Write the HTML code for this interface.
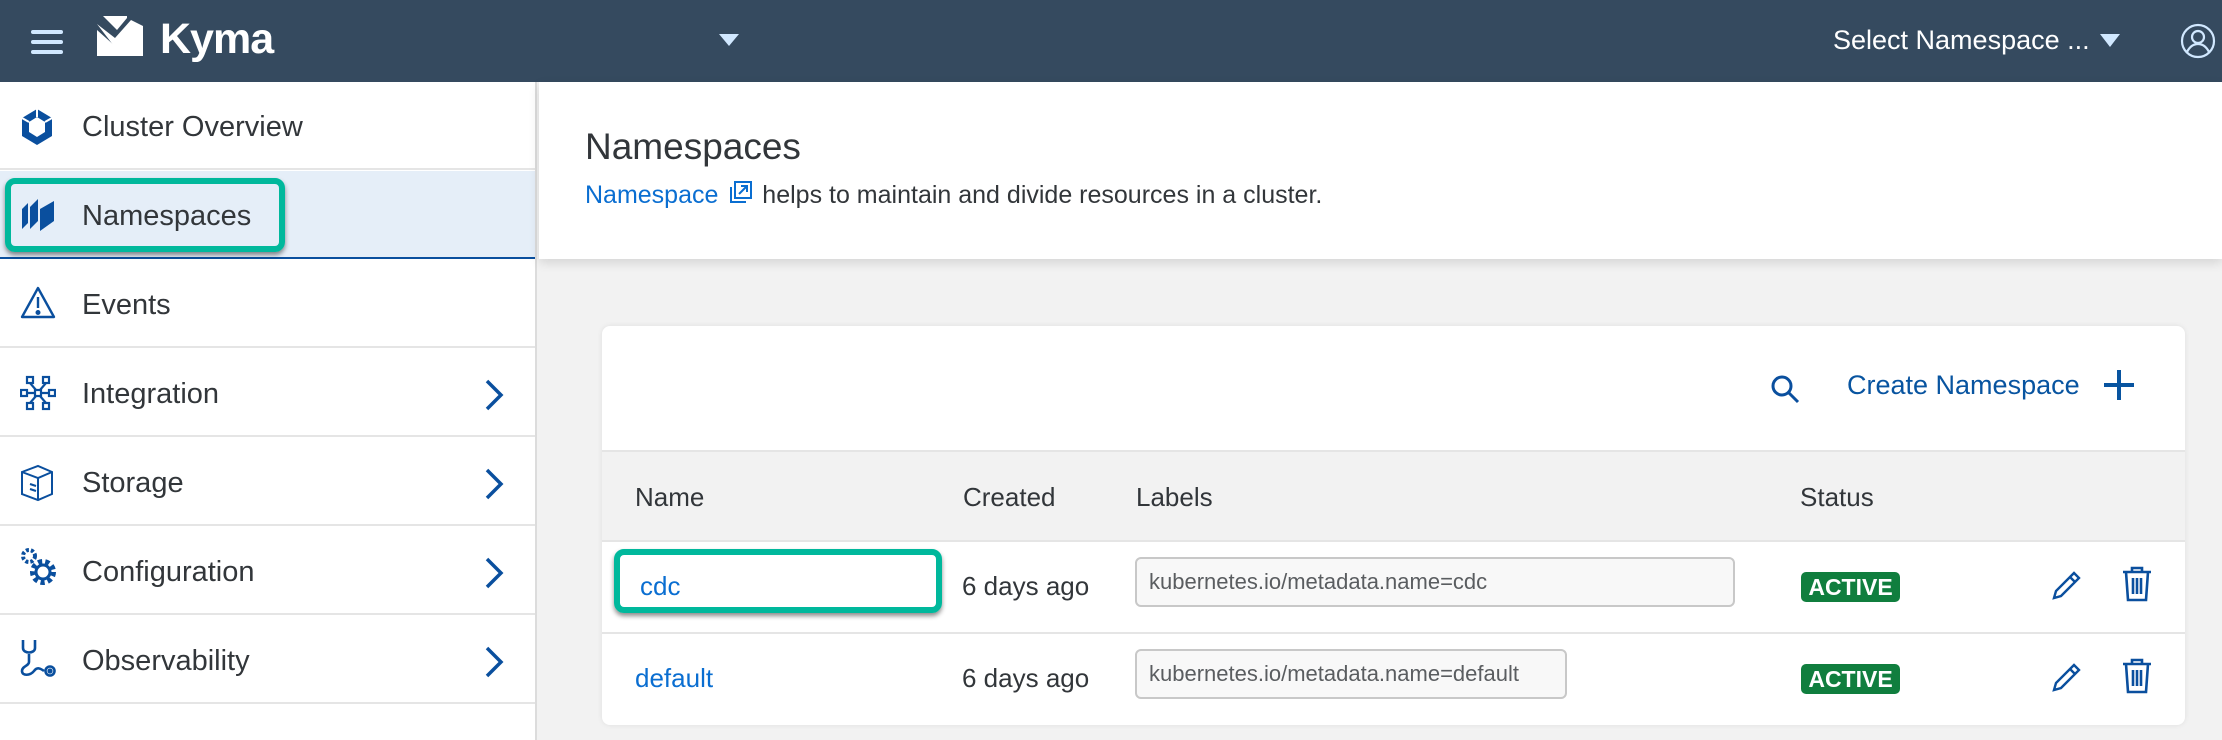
<!DOCTYPE html>
<html><head><meta charset="utf-8"><style>
*{box-sizing:border-box;margin:0;padding:0}
body{width:2222px;height:740px;overflow:hidden;background:#f2f2f2;font-family:"Liberation Sans",sans-serif;color:#32363a;position:relative}
.hdr{position:absolute;left:0;top:0;width:2222px;height:82px;background:#354a5f;color:#fff}
.abs{position:absolute}
.side{position:absolute;left:0;top:82px;width:537px;height:658px;background:#fff;border-right:2px solid #dcdcdc}
.item{position:absolute;left:0;width:535px;height:88px;border-bottom:2px solid #e5e5e5}
.item span{position:absolute;left:82px;top:29px;font-size:29px;color:#32363a}
.item svg.ic{position:absolute;left:20px;top:26px}
.chev{position:absolute;left:484px;top:30px}
.main{position:absolute;left:539px;top:82px;width:1683px;height:177px;background:#fff;box-shadow:0 4px 10px rgba(0,0,0,.12)}
.card{position:absolute;left:602px;top:326px;width:1583px;height:399px;background:#fff;border-radius:8px;box-shadow:0 0 6px rgba(0,0,0,.08);overflow:hidden}
.th{position:absolute;top:124px;left:0;width:100%;height:92px;background:#f2f2f2;border-top:2px solid #e5e5e5;border-bottom:2px solid #e5e5e5}
.th span,.row span.t{position:absolute;font-size:26px}
.row{position:absolute;left:0;width:100%;height:92px;border-bottom:2px solid #e5e5e5}
.lab{position:absolute;left:533px;top:15px;height:50px;border:2px solid #c8c8c8;border-radius:6px;background:#f8f8f8;font-size:22px;color:#5a5d60;padding:10px 12px 0}
.badge{position:absolute;left:1199px;top:30px;width:99px;height:30px;background:#107e3e;border-radius:5px;color:#fff;font-weight:bold;font-size:23px;text-align:center;line-height:30px}
</style></head><body>
<div class="hdr">
 <svg class="abs" style="left:31px;top:30px" width="32" height="24"><rect y="0" width="32" height="4" rx="2" fill="#d1e8ff"/><rect y="10" width="32" height="4" rx="2" fill="#d1e8ff"/><rect y="20" width="32" height="4" rx="2" fill="#d1e8ff"/></svg>
 <svg class="abs" style="left:97px;top:16px" width="46" height="40" viewBox="0 0 46 40"><path d="M0 8 L18 22 L34 4 L46 10 L46 40 L0 40 L0 30 L20 30 L46 18 L46 34 L20 34 Z" fill="#fff"/><path d="M6 0 L20 14 L30 2 L30 0 Z" fill="#fff"/><path d="M0 14 L18 30 L0 30Z" fill="#fff"/></svg>
 <div class="abs" style="left:160px;top:15px;font-size:43px;font-weight:bold;letter-spacing:-1px">Kyma</div>
 <svg class="abs" style="left:719px;top:34px" width="20" height="12"><path d="M0 0H20L10 12Z" fill="#d1e8ff"/></svg>
 <div class="abs" style="left:1833px;top:25px;font-size:27px">Select Namespace ...</div>
 <svg class="abs" style="left:2100px;top:34px" width="20" height="13"><path d="M0 0H20L10 13Z" fill="#d1e8ff"/></svg>
 <svg class="abs" style="left:2180px;top:23px" width="36" height="36" viewBox="0 0 36 36" fill="none" stroke="#d1e8ff" stroke-width="2.2"><circle cx="18" cy="18" r="16"/><circle cx="18" cy="14" r="6"/><path d="M7 29c3-6 7-8 11-8s8 2 11 8"/></svg>
</div>
<div class="side">
 <div class="item" style="top:0"><svg class="ic" width="34" height="38" viewBox="0 0 34 38"><path d="M17 1L32 10V28L17 37L2 28V10Z" fill="#0a4f9e"/><path d="M17 9L25 14V24L17 29L9 24V14Z" fill="#fff"/><path d="M17 1V9M2 10L9 14M32 10L25 14" stroke="#fff" stroke-width="2"/></svg><span>Cluster Overview</span></div>
 <div class="item" style="top:89px;background:#e5eef8;border-bottom:2px solid #0a4f9e"><svg class="ic" style="top:24px" width="36" height="38" viewBox="0 0 36 38"><path d="M2 14L8 8V28L2 34Z M10 12L18 4V26L10 34Z M20 14L34 6V26L20 36Z" fill="#0a4f9e"/></svg><span>Namespaces</span></div>
 <div class="item" style="top:178px"><svg class="ic" width="36" height="34" viewBox="0 0 36 34" fill="none" stroke="#0a4f9e" stroke-width="2.4"><path d="M18 2L34 31H2Z" stroke-linejoin="round"/><path d="M18 11V22"/><circle cx="18" cy="26.5" r="1.3" fill="#0a4f9e"/></svg><span>Events</span></div>
 <div class="item" style="top:267px"><svg class="ic" width="36" height="36" viewBox="0 0 36 36" fill="none" stroke="#0a4f9e" stroke-width="2.2"><rect x="7" y="2" width="6" height="6"/><rect x="23" y="2" width="6" height="6"/><rect x="1" y="15" width="6" height="6"/><rect x="15" y="15" width="6" height="6"/><rect x="29" y="15" width="6" height="6"/><rect x="7" y="28" width="6" height="6"/><rect x="23" y="28" width="6" height="6"/><path d="M7 18H15M21 18H29M10 8L16 15M26 8L20 15M10 28L16 21M26 28L20 21"/></svg><span>Integration</span><svg class="chev" width="20" height="32"><path d="M3 2L17 16L3 30" fill="none" stroke="#0a4f9e" stroke-width="3.5"/></svg></div>
 <div class="item" style="top:356px"><svg class="ic" width="34" height="38" viewBox="0 0 34 38" fill="none" stroke="#0a4f9e" stroke-width="2"><path d="M2 8L18 2L32 8V30L18 36L2 30Z M2 8L18 14L32 8M18 14V36M10 20L16 22M10 25L16 27"/></svg><span>Storage</span><svg class="chev" width="20" height="32"><path d="M3 2L17 16L3 30" fill="none" stroke="#0a4f9e" stroke-width="3.5"/></svg></div>
 <div class="item" style="top:445px"><svg class="ic" style="top:20px" width="38" height="40" viewBox="0 0 38 40"><circle cx="9" cy="9" r="6" fill="none" stroke="#0a4f9e" stroke-width="4" stroke-dasharray="3 2"/><circle cx="23" cy="25" r="10" fill="none" stroke="#0a4f9e" stroke-width="6" stroke-dasharray="4 3"/><circle cx="23" cy="25" r="7" fill="none" stroke="#0a4f9e" stroke-width="3"/></svg><span>Configuration</span><svg class="chev" width="20" height="32"><path d="M3 2L17 16L3 30" fill="none" stroke="#0a4f9e" stroke-width="3.5"/></svg></div>
 <div class="item" style="top:534px"><svg class="ic" style="top:22px" width="38" height="40" viewBox="0 0 38 40" fill="none" stroke="#0a4f9e" stroke-width="2.6"><path d="M3 2V10C3 16 15 16 15 10V2M9 16V24C9 28 2 28 2 33C2 38 10 38 14 33C17 29 20 30 24 33"/><circle cx="30" cy="33" r="4.5"/><circle cx="30" cy="33" r="1.3" fill="#0a4f9e"/></svg><span>Observability</span><svg class="chev" width="20" height="32"><path d="M3 2L17 16L3 30" fill="none" stroke="#0a4f9e" stroke-width="3.5"/></svg></div>
</div>
<div class="abs" style="left:5px;top:178px;width:280px;height:74px;border:6px solid #00b89c;border-radius:10px;box-shadow:0 3px 5px rgba(0,0,0,.45)"></div>
<div class="main">
 <div class="abs" style="left:46px;top:44px;font-size:37px">Namespaces</div>
 <div class="abs" style="left:46px;top:99px;font-size:25px"><span style="color:#0a6ed1">Namespace</span> <svg width="26" height="24" viewBox="0 0 26 24" style="vertical-align:-2px;margin:0 2px" fill="none" stroke="#0a6ed1" stroke-width="2"><rect x="8" y="1" width="16" height="16"/><path d="M4 6V21H19M12 13L20 5M14 5H20V11"/></svg> helps to maintain and divide resources in a cluster.</div>
</div>
<div class="card">
 <svg class="abs" style="left:1168px;top:48px" width="30" height="30" viewBox="0 0 30 30" fill="none" stroke="#0a4f9e" stroke-width="3"><circle cx="12" cy="12" r="9"/><path d="M19 19L28 28"/></svg>
 <div class="abs" style="left:1245px;top:44px;font-size:27px;color:#0854a0">Create Namespace</div>
 <svg class="abs" style="left:1502px;top:44px" width="30" height="30"><path d="M15 0V30M0 15H30" stroke="#0854a0" stroke-width="4"/></svg>
 <div class="th"><span style="left:33px;top:30px">Name</span><span style="left:361px;top:30px">Created</span><span style="left:534px;top:30px">Labels</span><span style="left:1198px;top:30px">Status</span></div>
 <div class="row" style="top:216px"><span class="t" style="left:38px;top:29px;color:#0a6ed1">cdc</span><span class="t" style="left:360px;top:29px">6 days ago</span><div class="lab" style="width:600px">kubernetes.io/metadata.name=cdc</div><div class="badge">ACTIVE</div>
 <svg class="abs" style="left:1448px;top:28px" width="32" height="32" viewBox="0 0 32 32" fill="none" stroke="#0a4f9e" stroke-width="2.4"><path d="M4 28L6 21L24 3L29 8L11 26Z M20 7L25 12"/></svg>
 <svg class="abs" style="left:1520px;top:24px" width="30" height="36" viewBox="0 0 30 36" fill="none" stroke="#0a4f9e" stroke-width="2.6"><path d="M1 6H29M10 6V2H20V6M4 6L6 34H24L26 6M11 12V28M15 12V28M19 12V28"/></svg></div>
 <div class="row" style="top:308px;border-bottom:none"><span class="t" style="left:33px;top:29px;color:#0a6ed1">default</span><span class="t" style="left:360px;top:29px">6 days ago</span><div class="lab" style="width:432px">kubernetes.io/metadata.name=default</div><div class="badge">ACTIVE</div>
 <svg class="abs" style="left:1448px;top:28px" width="32" height="32" viewBox="0 0 32 32" fill="none" stroke="#0a4f9e" stroke-width="2.4"><path d="M4 28L6 21L24 3L29 8L11 26Z M20 7L25 12"/></svg>
 <svg class="abs" style="left:1520px;top:24px" width="30" height="36" viewBox="0 0 30 36" fill="none" stroke="#0a4f9e" stroke-width="2.6"><path d="M1 6H29M10 6V2H20V6M4 6L6 34H24L26 6M11 12V28M15 12V28M19 12V28"/></svg></div>
</div>
<div class="abs" style="left:614px;top:549px;width:328px;height:64px;border:6px solid #00b89c;border-radius:10px;box-shadow:0 3px 5px rgba(0,0,0,.45)"></div>
</body></html>
